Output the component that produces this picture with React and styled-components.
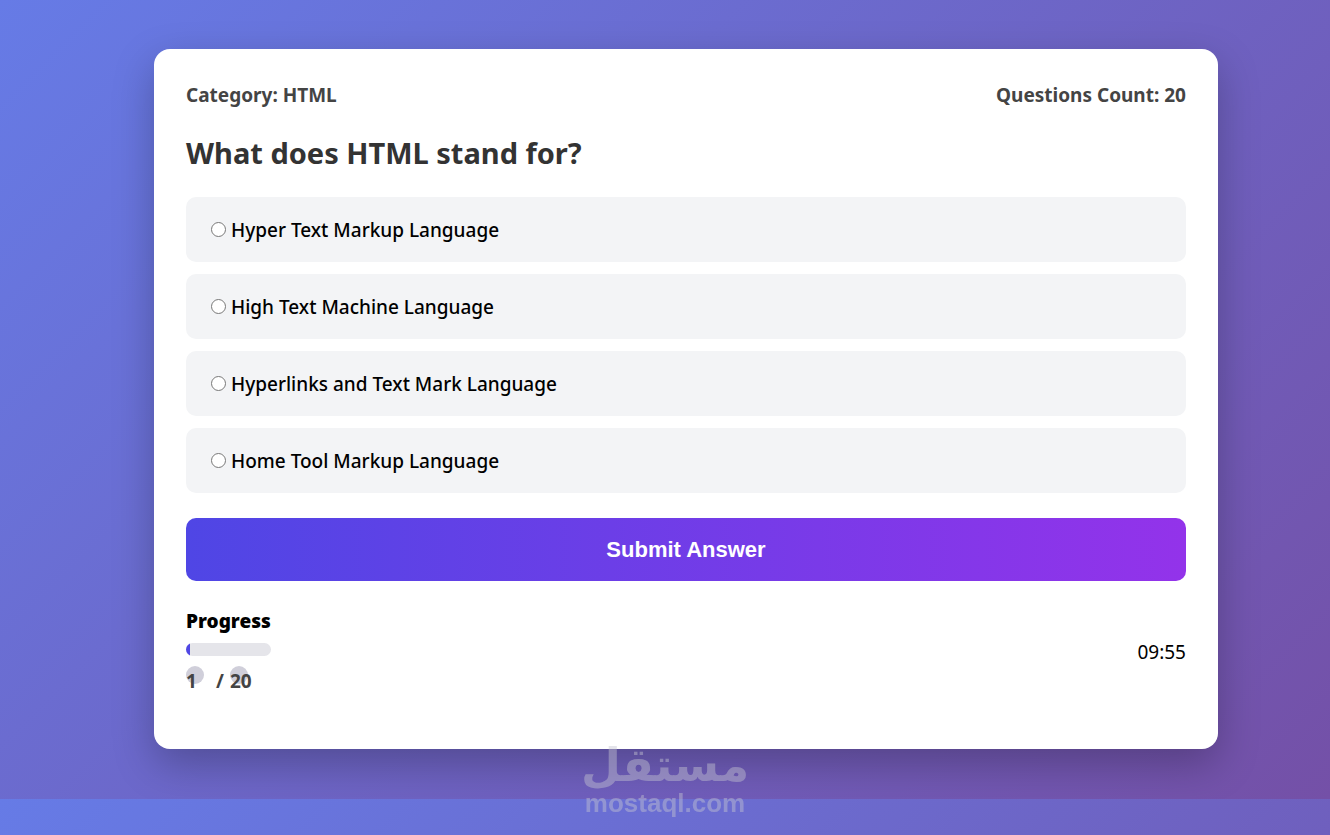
import React, { useState } from "react";
import styled, { createGlobalStyle } from "styled-components";

const OPTIONS = [
  "Hyper Text Markup Language",
  "High Text Machine Language",
  "Hyperlinks and Text Mark Language",
  "Home Tool Markup Language",
];

const TOTAL = 20;

const App = () => {
  const [current] = useState(1);
  const [answer, setAnswer] = useState("");

  return (
    <>
      <GlobalStyle />
      <Page>
        <Card>
          <Info>
            <span>Category: HTML</span>
            <span>Questions Count: {TOTAL}</span>
          </Info>
          <Question>What does HTML stand for?</Question>
          <Options>
            {OPTIONS.map((text) => (
              <Option key={text}>
                <Radio
                  type="radio"
                  name="answer"
                  checked={answer === text}
                  onChange={() => setAnswer(text)}
                />
                {text}
              </Option>
            ))}
          </Options>
          <Submit type="button">Submit Answer</Submit>
          <Footer>
            <Progress>
              <ProgressTitle>Progress</ProgressTitle>
              <Bar>
                <Fill style={{ width: `${(current / TOTAL) * 100}%` }} />
              </Bar>
              <Bullets>
                <Bullet>{current}</Bullet>
                <Slash>/</Slash>
                <Bullet>{TOTAL}</Bullet>
              </Bullets>
            </Progress>
            <Timer>09:55</Timer>
          </Footer>
        </Card>
      </Page>
      <Watermark>
        <WatermarkName lang="ar">مستقل</WatermarkName>
        <WatermarkSite>mostaql.com</WatermarkSite>
      </Watermark>
    </>
  );
};

const GlobalStyle = createGlobalStyle`
  * {
    box-sizing: border-box;
  }

  body {
    margin: 0;
    font-family: "Segoe UI", "Noto Sans", sans-serif;
    font-size: 19px;
    background: linear-gradient(135deg, #667be6, #7450a7);
  }
`;

const Page = styled.main`
  padding: 49px 112px 50px 154px;
`;

const Card = styled.section`
  padding: 32px 32px 52px;
  background-color: #fff;
  border-radius: 16px;
  box-shadow: 0 15px 40px rgba(0, 0, 0, 0.25);
`;

const Info = styled.div`
  display: flex;
  justify-content: space-between;
  line-height: 28px;
  font-weight: 700;
  color: #444;
`;

const Question = styled.h2`
  margin: 24px 0;
  font-size: 29px;
  line-height: 40px;
  font-weight: 700;
  color: #333;
`;

const Options = styled.div`
  display: flex;
  flex-direction: column;
  gap: 12px;
`;

const Option = styled.label`
  display: flex;
  align-items: center;
  gap: 5px;
  height: 65px;
  padding: 0 25px;
  border-radius: 10px;
  background-color: #f3f4f6;
  font-weight: 500;
  color: #000;
  cursor: pointer;
`;

const Radio = styled.input`
  width: 15px;
  height: 15px;
  margin: 0;
`;

const Submit = styled.button`
  display: block;
  width: 100%;
  height: 63px;
  margin: 25px 0 26px;
  border: none;
  border-radius: 10px;
  background: linear-gradient(to right, #4f46e5, #9333ea);
  color: #fff;
  font-family: Arial, "Liberation Sans", sans-serif;
  font-size: 22px;
  font-weight: 700;
  cursor: pointer;
`;

const Footer = styled.div`
  display: flex;
  align-items: center;
  justify-content: space-between;
`;

const Progress = styled.div`
  display: flex;
  flex-direction: column;
`;

const ProgressTitle = styled.div`
  line-height: 28px;
  font-weight: 900;
`;

const Bar = styled.div`
  height: 13px;
  margin: 8px 0 10px;
  border-radius: 8px;
  overflow: hidden;
  background-color: #e5e5ea;
`;

const Fill = styled.div`
  height: 100%;
  background-color: #4f46e5;
`;

const Bullets = styled.div`
  display: flex;
  height: 31px;
  line-height: 30px;
  font-weight: 700;
  color: #444;
`;

const Bullet = styled.span`
  width: 18px;
  height: 18px;
  border-radius: 50%;
  background-color: #d0cfda;
`;

const Slash = styled.span`
  margin: 0 6px 0 12px;
`;

const Timer = styled.div`
  line-height: 28px;
`;

const Watermark = styled.div`
  position: fixed;
  left: 0;
  right: 0;
  bottom: 18px;
  display: flex;
  flex-direction: column;
  align-items: center;
  color: #c4c4d0;
  opacity: 0.45;
  pointer-events: none;
`;

const WatermarkName = styled.span`
  font-family: "DejaVu Sans", sans-serif;
  font-size: 46px;
  line-height: 48px;
  font-weight: 700;
`;

const WatermarkSite = styled.span`
  font-family: "Liberation Sans", sans-serif;
  font-size: 26px;
  line-height: 28px;
  font-weight: 700;
`;

export default App;
